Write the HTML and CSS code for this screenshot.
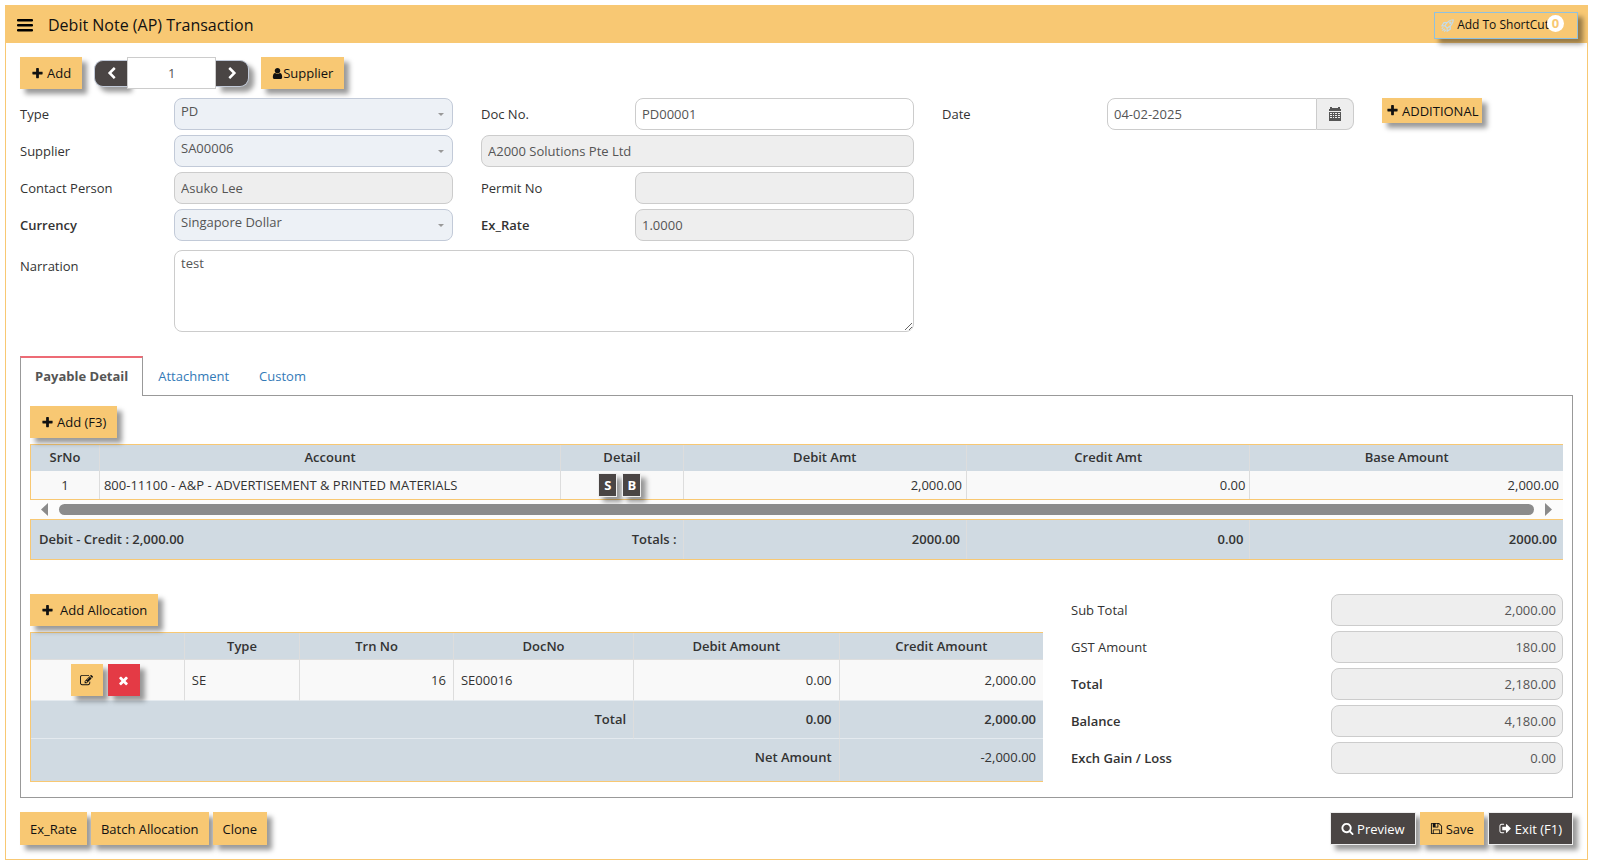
FILE: index.html
```
<!DOCTYPE html>
<html lang="en">
<head>
    <meta charset="utf-8">
    <title>Debit Note (AP) Transaction</title>
    <link rel="stylesheet" href="styles.css">
</head>

<body>
    <!-- icon set -->
    <svg class="sprite" aria-hidden="true">
        <symbol id="plus" viewBox="0 0 1792 1792"><path d="M1600 736v192q0 40-28 68t-68 28h-416v416q0 40-28 68t-68 28h-192q-40 0-68-28t-28-68v-416h-416q-40 0-68-28t-28-68v-192q0-40 28-68t68-28h416v-416q0-40 28-68t68-28h192q40 0 68 28t28 68v416h416q40 0 68 28t28 68z"/></symbol>
        <symbol id="times" viewBox="0 0 1792 1792"><path d="M1490 1322q0 40-28 68l-136 136q-28 28-68 28t-68-28l-294-294-294 294q-28 28-68 28t-68-28l-136-136q-28-28-28-68t28-68l294-294-294-294q-28-28-28-68t28-68l136-136q28-28 68-28t68 28l294 294 294-294q28-28 68-28t68 28l136 136q28 28 28 68t-28 68l-294 294 294 294q28 28 28 68z"/></symbol>
        <symbol id="left" viewBox="0 0 1792 1792"><path d="M1427 301l-531 531 531 531q19 19 19 45t-19 45l-166 166q-19 19-45 19t-45-19l-742-742q-19-19-19-45t19-45l742-742q19-19 45-19t45 19l166 166q19 19 19 45t-19 45z"/></symbol>
        <symbol id="right" viewBox="0 0 1792 1792"><path d="M1363 877l-742 742q-19 19-45 19t-45-19l-166-166q-19-19-19-45t19-45l531-531-531-531q-19-19-19-45t19-45l166-166q19-19 45-19t45 19l742 742q19 19 19 45t-19 45z"/></symbol>
        <symbol id="user" viewBox="256 0 1280 1792"><path d="M1536 1399q0 109-62.500 187t-150.500 78h-854q-88 0-150.500-78t-62.500-187q0-85 8.500-160.500t31.500-152 58.500-131 94-89 134.500-34.500q131 128 313 128t313-128q76 0 134.500 34.500t94 89 58.500 131 31.500 152 8.500 160.500zm-256-887q0 159-112.500 271.500t-271.500 112.500-271.500-112.500-112.500-271.500 112.500-271.500 271.500-112.500 271.500 112.500 112.500 271.500z"/></symbol>
        <symbol id="search" viewBox="0 0 1792 1792"><path d="M1216 832q0-185-131.500-316.500t-316.500-131.500-316.500 131.500-131.500 316.500 131.500 316.500 316.500 131.500 316.500-131.500 131.500-316.500zm512 832q0 52-38 90t-90 38q-54 0-90-38l-343-342q-179 124-399 124-143 0-273.500-55.500t-225-150-150-225-55.500-273.500 55.500-273.500 150-225 225-150 273.500-55.500 273.500 55.500 225 150 150 225 55.500 273.500q0 220-124 399l343 343q37 37 37 90z"/></symbol>
        <symbol id="save" viewBox="0 0 1792 1792"><path d="M512 1536h768v-384h-768v384zm896 0h128v-896q0-14-10-38.500t-20-34.500l-281-281q-10-10-34-20t-39-10v416q0 40-28 68t-68 28h-576q-40 0-68-28t-28-68v-416h-128v1280h128v-416q0-40 28-68t68-28h832q40 0 68 28t28 68v416zm-384-928v-320q0-13-9.500-22.500t-22.500-9.500h-192q-13 0-22.500 9.500t-9.500 22.500v320q0 13 9.500 22.500t22.500 9.500h192q13 0 22.500-9.500t9.500-22.500zm640 32v928q0 40-28 68t-68 28h-1344q-40 0-68-28t-28-68v-1344q0-40 28-68t68-28h928q40 0 88 20t76 48l280 280q28 28 48 76t20 88z"/></symbol>
        <symbol id="exit" viewBox="0 0 1792 1792"><path d="M704 1440q0 4 1 20t.5 26.500-3 23.500-10 19.500-20.500 6.500h-320q-119 0-203.500-84.500t-84.500-203.500v-704q0-119 84.500-203.500t203.500-84.500h320q13 0 22.500 9.500t9.500 22.500q0 4 1 20t.5 26.500-3 23.500-10 19.500-20.500 6.500h-320q-66 0-113 47t-47 113v704q0 66 47 113t113 47h312l11.500 1 11.500 3 8 5.500 7 9 2 13.500zm928-544q0 26-19 45l-544 544q-19 19-45 19t-45-19-19-45v-288h-448q-26 0-45-19t-19-45v-384q0-26 19-45t45-19h448v-288q0-26 19-45t45-19 45 19l544 544q19 19 19 45z"/></symbol>
        <symbol id="edit" viewBox="0 0 1792 1792"><path d="M888 1184l116-116-152-152-116 116v56h96v96h56zm440-720q-16-16-33 1l-350 350q-17 17-1 33t33-1l350-350q17-17 1-33zm80 594v190q0 119-84.500 203.500t-203.500 84.500h-832q-119 0-203.500-84.500t-84.500-203.500v-832q0-119 84.500-203.500t203.500-84.500h832q63 0 117 25 15 7 18 23 3 17-9 29l-49 49q-14 14-32 8-23-6-45-6h-832q-66 0-113 47t-47 113v832q0 66 47 113t113 47h832q66 0 113-47t47-113v-126q0-13 9-22l64-64q15-15 35-7t20 29zm-96-738l288 288-672 672h-288v-288zm444 132l-92 92-288-288 92-92q28-28 68-28t68 28l152 152q28 28 28 68t-28 68z"/></symbol>
        <symbol id="bars" viewBox="0 0 16 14"><path d="M1 1h14a1 1 0 0 1 0 2.500h-14a1 1 0 0 1 0-2.500zM1 6h14a1 1 0 0 1 0 2.500h-14a1 1 0 0 1 0-2.500zM1 11h14a1 1 0 0 1 0 2.500h-14a1 1 0 0 1 0-2.500z"/></symbol>
        <symbol id="rocket" viewBox="0 0 14 14"><path fill="none" stroke="currentColor" stroke-width="1.300" stroke-linejoin="round" d="M13.200.8c-4 0-6 1.500-9 6.500L6.700 9.800c5-3 6.500-5 6.500-9zM6.200 4H3L.8 7.500l3.400-.2M10 7.800V11l-3.500 2.200.2-3.400M4 10.500l-2.500 2M2.500 9l-1.700 1.500M5 11.800l-1.500 1.700"/><circle cx="10" cy="4" r="1.300"/></symbol>
        <symbol id="calendar" viewBox="0 0 14 14"><path fill-rule="evenodd" d="M1 2h1V0h2v1h6V0h2v2h1v2H1zM1 5h12v9H1zM2 6v1h2V6zm3 0v1h1V6zm2 0v1h2V6zm3 0v1h2V6zM2 8v1h2V8zm3 0v1h1V8zm2 0v1h2V8zm3 0v1h2V8zM2 10v1h2v-1zm3 0v1h1v-1zm2 0v1h2v-1zm3 0v1h2v-1z"/></symbol>
        <symbol id="arrow-left" viewBox="0 0 7 13"><path d="M7 0v13L0 6.500z"/></symbol>
        <symbol id="arrow-right" viewBox="0 0 7 13"><path d="M0 0v13l7-6.500z"/></symbol>
    </svg>

    <div class="page">
        <header class="topbar">
            <button class="menu" aria-label="Menu"><svg class="bars"><use href="#bars"/></svg></button>
            <h1>Debit Note (AP) Transaction</h1>
            <button class="shortcut"><svg class="icon"><use href="#rocket"/></svg>Add To ShortCut<span class="badge">0</span></button>
        </header>

        <main class="content">
            <div class="toolbar">
                <button class="btn"><svg class="icon"><use href="#plus"/></svg>Add</button>
                <div class="pager">
                    <button class="prev" aria-label="Previous"><svg class="icon"><use href="#left"/></svg></button>
                    <input class="pageNo" type="text" value="1" aria-label="Record">
                    <button class="next" aria-label="Next"><svg class="icon"><use href="#right"/></svg></button>
                </div>
                <button class="btn tight"><svg class="icon"><use href="#user"/></svg>Supplier</button>
            </div>

            <form class="form">
                <label class="c1" for="type">Type</label>
                <div class="select c2"><select id="type"><option>PD</option></select></div>
                <label class="c4" for="docNo">Doc No.</label>
                <input class="field c5" id="docNo" type="text" value="PD00001">
                <label class="c7" for="date">Date</label>
                <div class="dateBox c8">
                    <input class="field" id="date" type="text" value="04-02-2025">
                    <button type="button" class="addon" aria-label="Pick a date"><svg class="icon"><use href="#calendar"/></svg></button>
                </div>
                <button type="button" class="btn small c10"><svg class="icon"><use href="#plus"/></svg>ADDITIONAL</button>

                <label class="c1" for="supplier">Supplier</label>
                <div class="select c2"><select id="supplier"><option>SA00006</option></select></div>
                <input class="field wide" type="text" value="A2000 Solutions Pte Ltd" aria-label="Supplier name" readonly>

                <label class="c1" for="contact">Contact Person</label>
                <input class="field c2" id="contact" type="text" value="Asuko Lee" readonly>
                <label class="c4" for="permit">Permit No</label>
                <input class="field c5" id="permit" type="text" readonly>

                <label class="c1 strong" for="currency">Currency</label>
                <div class="select c2"><select id="currency"><option>Singapore Dollar</option></select></div>
                <label class="c4 strong" for="rate">Ex_Rate</label>
                <input class="field c5" id="rate" type="text" value="1.0000" readonly>

                <label class="c1 top" for="narration">Narration</label>
                <textarea class="narration" id="narration">test</textarea>
            </form>

            <nav class="tabs">
                <a class="active" href="#detail">Payable Detail</a>
                <a href="#attachment">Attachment</a>
                <a href="#custom">Custom</a>
            </nav>

            <section class="panel" id="detail">
                <button class="btn"><svg class="icon"><use href="#plus"/></svg>Add (F3)</button>

                <table class="grid lines">
                    <colgroup><col class="w69"><col class="w462"><col class="w122"><col class="w283"><col class="w283"><col></colgroup>
                    <thead>
                        <tr><th>SrNo</th><th>Account</th><th>Detail</th><th>Debit Amt</th><th>Credit Amt</th><th>Base Amount</th></tr>
                    </thead>
                    <tbody>
                        <tr>
                            <td class="center">1</td>
                            <td>800-11100 - A&amp;P - ADVERTISEMENT &amp; PRINTED MATERIALS</td>
                            <td class="center"><div class="pair"><button class="letter">S</button><button class="letter">B</button></div></td>
                            <td class="num">2,000.00</td>
                            <td class="num">0.00</td>
                            <td class="num">2,000.00</td>
                        </tr>
                    </tbody>
                </table>
                <div class="scroll">
                    <svg class="arrow"><use href="#arrow-left"/></svg>
                    <div class="thumb"></div>
                    <svg class="arrow"><use href="#arrow-right"/></svg>
                </div>
                <table class="grid totals">
                    <colgroup><col class="w69"><col class="w462"><col class="w122"><col class="w283"><col class="w283"><col></colgroup>
                    <tbody>
                        <tr>
                            <td colspan="3"><div class="split"><span>Debit - Credit : 2,000.00</span><span>Totals :</span></div></td>
                            <td class="num">2000.00</td>
                            <td class="num">0.00</td>
                            <td class="num">2000.00</td>
                        </tr>
                    </tbody>
                </table>

                <div class="lower">
                    <div class="allocation">
                        <button class="btn loose"><svg class="icon"><use href="#plus"/></svg>Add Allocation</button>
                        <table class="grid alloc">
                            <colgroup><col class="a1"><col class="a2"><col class="a1"><col class="a4"><col class="a5"><col></colgroup>
                            <thead>
                                <tr><th></th><th>Type</th><th>Trn No</th><th>DocNo</th><th>Debit Amount</th><th>Credit Amount</th></tr>
                            </thead>
                            <tbody>
                                <tr>
                                    <td><div class="pair"><button class="btn square" aria-label="Edit"><svg class="icon"><use href="#edit"/></svg></button><button class="btn square danger" aria-label="Delete"><svg class="icon"><use href="#times"/></svg></button></div></td>
                                    <td>SE</td>
                                    <td class="num">16</td>
                                    <td>SE00016</td>
                                    <td class="num">0.00</td>
                                    <td class="num">2,000.00</td>
                                </tr>
                            </tbody>
                            <tfoot>
                                <tr class="sum"><td colspan="4" class="num strong">Total</td><td class="num strong">0.00</td><td class="num strong">2,000.00</td></tr>
                                <tr class="net"><td colspan="5" class="num strong">Net Amount</td><td class="num">-2,000.00</td></tr>
                            </tfoot>
                        </table>
                    </div>

                    <div class="summary">
                        <label for="subTotal">Sub Total</label>
                        <input class="field" id="subTotal" type="text" value="2,000.00" readonly>
                        <label for="gst">GST Amount</label>
                        <input class="field" id="gst" type="text" value="180.00" readonly>
                        <label class="strong" for="total">Total</label>
                        <input class="field" id="total" type="text" value="2,180.00" readonly>
                        <label class="strong" for="balance">Balance</label>
                        <input class="field" id="balance" type="text" value="4,180.00" readonly>
                        <label class="strong" for="exch">Exch Gain / Loss</label>
                        <input class="field" id="exch" type="text" value="0.00" readonly>
                    </div>
                </div>
            </section>

            <footer class="actions">
                <button class="btn">Ex_Rate</button>
                <button class="btn">Batch Allocation</button>
                <button class="btn">Clone</button>
                <button class="btn dark first"><svg class="icon"><use href="#search"/></svg>Preview</button>
                <button class="btn"><svg class="icon"><use href="#save"/></svg>Save</button>
                <button class="btn dark"><svg class="icon"><use href="#exit"/></svg>Exit (F1)</button>
            </footer>
        </main>
    </div>
</body>

</html>
```

FILE: styles.css
```
* {
    box-sizing: border-box;
}

body {
    margin: 0;
    padding: 5px 11px 8px 5px;
    background-color: #fff;
    color: #333;
    font-family: "Open Sans", "Noto Sans", sans-serif;
    font-size: 13px;
    line-height: 18px;
}

button, input, select, textarea {
    font: inherit;
    color: inherit;
    margin: 0;
}

button {
    border: none;
    cursor: pointer;
}

.sprite {
    display: none;
}

.icon {
    width: 13px;
    height: 13px;
    fill: currentColor;
    flex: none;
}

.strong {
    font-weight: 600;
}

.page {
    border: 1px solid #f8c873;
    border-top: none;
}

/* top bar */
.topbar {
    display: flex;
    align-items: center;
    height: 38px;
    padding: 2px 9px 0 11px;
    background-color: #f8c873;
    color: #111;
}

.topbar h1 {
    flex: 1;
    margin: 0;
    font-size: 16px;
    font-weight: 400;
}

.menu {
    display: flex;
    padding: 0;
    margin-right: 15px;
    background: none;
}

.bars {
    width: 16px;
    height: 14px;
}

.shortcut {
    position: relative;
    display: flex;
    align-items: center;
    gap: 3px;
    height: 27px;
    padding: 0 28px 0 6px;
    border: 1px solid #8fc1e0;
    background-color: #f8c873;
    color: #111;
    font-size: 12px;
    box-shadow: 5px 5px 5px rgba(0, 0, 0, 0.4);
}

.shortcut .icon {
    color: #c3dcec;
}

.badge {
    position: absolute;
    top: 2px;
    right: 13px;
    width: 17px;
    height: 17px;
    border-radius: 50%;
    background-color: #fff;
    color: #f8c873;
    font-size: 13px;
    font-weight: 700;
    line-height: 17px;
    text-align: center;
}

.content {
    padding: 14px;
}

/* buttons */
.btn {
    display: inline-flex;
    align-items: center;
    justify-content: center;
    gap: 3px;
    height: 32px;
    padding: 0 11px;
    background-color: #f8c873;
    color: #111;
    white-space: nowrap;
    box-shadow: 5px 5px 5px rgba(0, 0, 0, 0.4);
}

.tight {
    gap: 0;
}

.tight .icon {
    width: 11px;
}

.loose {
    gap: 6px;
}

.small {
    height: 25px;
    padding: 0 4px;
}

.square {
    width: 32px;
    padding: 0;
}

.danger {
    background-color: #e43a45;
    color: #fff;
}

.dark {
    background-color: #4a4544;
    border: 1px solid #eee;
    color: #fff;
}

/* toolbar */
.toolbar {
    display: flex;
    align-items: center;
    gap: 12px;
    margin-bottom: 9px;
}

.pager {
    display: flex;
    align-items: center;
}

.prev, .next {
    display: flex;
    align-items: center;
    justify-content: center;
    width: 33px;
    height: 27px;
    padding: 0;
    border: 1px solid #c2cad8;
    background-color: #4a4544;
    color: #fff;
    box-shadow: 5px 5px 5px rgba(0, 0, 0, 0.4);
}

.prev {
    border-right: none;
    border-radius: 9px 0 0 9px;
}

.next {
    border-left: none;
    border-radius: 0 9px 9px 0;
}

.pageNo {
    position: relative;
    width: 89px;
    height: 32px;
    border: 1px solid #ccc;
    background-color: #fff;
    color: #555;
    text-align: center;
}

/* form */
.form {
    display: grid;
    grid-template-columns: 154fr 279fr 28px 154fr 279fr 28px 165fr 247fr 28px 191fr;
    row-gap: 5px;
    align-items: center;
}

.c1 { grid-column: 1; }
.c2 { grid-column: 2; }
.c4 { grid-column: 4; }
.c5 { grid-column: 5; }
.c7 { grid-column: 7; }
.c8 { grid-column: 8; }
.c10 { grid-column: 10; justify-self: start; align-self: start; }
.wide { grid-column: 4 / 6; }

.field {
    width: 100%;
    min-width: 0;
    height: 32px;
    padding: 0 6px;
    border: 1px solid #ccc;
    border-radius: 8px;
    background-color: #fff;
    color: #555;
}

.field:read-only {
    background-color: #eee;
}

.select {
    position: relative;
}

.select select {
    display: block;
    width: 100%;
    height: 32px;
    padding: 0 20px 6px 6px;
    border: 1px solid #c2cad8;
    border-radius: 8px;
    background-color: #edf1f6;
    color: #555;
    appearance: none;
}

.select::after {
    content: "";
    position: absolute;
    top: 15px;
    right: 9px;
    border: 3px solid transparent;
    border-top-color: #999;
    border-bottom: none;
}

.dateBox {
    display: flex;
}

.dateBox .field {
    flex: 1;
    border-radius: 8px 0 0 8px;
}

.addon {
    display: flex;
    align-items: center;
    justify-content: center;
    width: 37px;
    height: 32px;
    padding: 0;
    border: 1px solid #ccc;
    border-left: none;
    border-radius: 0 8px 8px 0;
    background-color: #eee;
    color: #555;
}

.addon .icon {
    width: 14px;
    height: 14px;
}

.top {
    align-self: start;
    margin-top: 11px;
}

.narration {
    grid-column: 2 / 6;
    height: 82px;
    margin-top: 4px;
    padding: 3px 6px;
    border: 1px solid #ccc;
    border-radius: 8px;
    color: #555;
}

/* tabs */
.tabs {
    display: flex;
    margin-top: 24px;
}

.tabs a {
    height: 39px;
    padding: 0 15px;
    border-top: 2px solid transparent;
    color: #337ab7;
    line-height: 36px;
    text-decoration: none;
}

.tabs .active {
    position: relative;
    height: 40px;
    margin-bottom: -1px;
    padding: 0 14px;
    border: 1px solid #999;
    border-top: 2px solid #ed6b75;
    border-bottom: none;
    background-color: #fff;
    color: #555;
    font-weight: 700;
}

.panel {
    padding: 10px 9px 15px;
    border: 1px solid #999;
}

/* tables */
.grid {
    width: 100%;
    margin-top: 6px;
    border: 1px solid #f8c873;
    border-right: none;
    border-spacing: 0;
    table-layout: fixed;
    background-color: #d0dae2;
}

.grid th, .grid td {
    padding: 0 4px;
    border-right: 1px solid #ddd;
    text-align: left;
}

.grid th {
    height: 26px;
    padding-bottom: 2px;
    font-weight: 600;
    text-align: center;
}

.grid th:last-child, .grid td:last-child {
    border-right: none;
}

.grid tbody td {
    height: 28px;
    background-color: #f9f9f9;
}

.grid .center {
    text-align: center;
}

.grid .num {
    text-align: right;
}

.w69 { width: 4.5%; }
.w462 { width: 30.1%; }
.w122 { width: 8%; }
.w283 { width: 18.5%; }

.pair {
    display: flex;
    justify-content: center;
    gap: 5px;
    padding-right: 4px;
}

.letter {
    min-width: 19px;
    height: 24px;
    padding: 0 4px;
    border: 1px solid #eee;
    background-color: #4a4544;
    color: #fff;
    font-weight: 700;
    box-shadow: 5px 5px 5px rgba(0, 0, 0, 0.4);
}

.scroll {
    display: flex;
    align-items: center;
    gap: 11px;
    height: 19px;
    padding: 0 11px;
    background-color: #fcfcfc;
}

.arrow {
    width: 7px;
    height: 13px;
    fill: #8b8b8b;
}

.thumb {
    flex: 1;
    height: 11px;
    border-radius: 6px;
    background-color: #8b8b8b;
}

.totals {
    margin-top: 0;
}

.grid.totals td {
    height: 39px;
    padding: 0 6px 2px;
    background-color: #d0dae2;
    font-weight: 600;
}

.split {
    display: flex;
    justify-content: space-between;
    padding-left: 2px;
}

/* allocation and summary */
.lower {
    display: flex;
    gap: 28px;
    margin-top: 34px;
}

.allocation {
    flex: 1013;
}

.a1 { width: 15.2%; }
.a2 { width: 11.4%; }
.a4 { width: 17.8%; }
.a5 { width: 20.3%; }

.alloc th, .alloc td {
    padding: 0 7px;
}

.grid.alloc tbody td {
    height: 42px;
    border-top: 1px solid #ddd;
    border-bottom: 1px solid #e4eaef;
}

.alloc .sum td {
    height: 38px;
    padding-bottom: 2px;
    border-bottom: 1px solid #e4eaef;
}

.alloc .net td {
    height: 42px;
    padding-bottom: 6px;
}

.summary {
    flex: 492;
    display: grid;
    grid-template-columns: 260fr 232fr;
    gap: 5px 0;
    align-items: center;
    align-content: start;
}

.summary .field {
    text-align: right;
}

/* bottom buttons */
.actions {
    display: flex;
    gap: 4px;
    padding-top: 14px;
}

.actions .btn {
    height: 33px;
    padding: 0 10px;
}

.first {
    margin-left: auto;
}
```
